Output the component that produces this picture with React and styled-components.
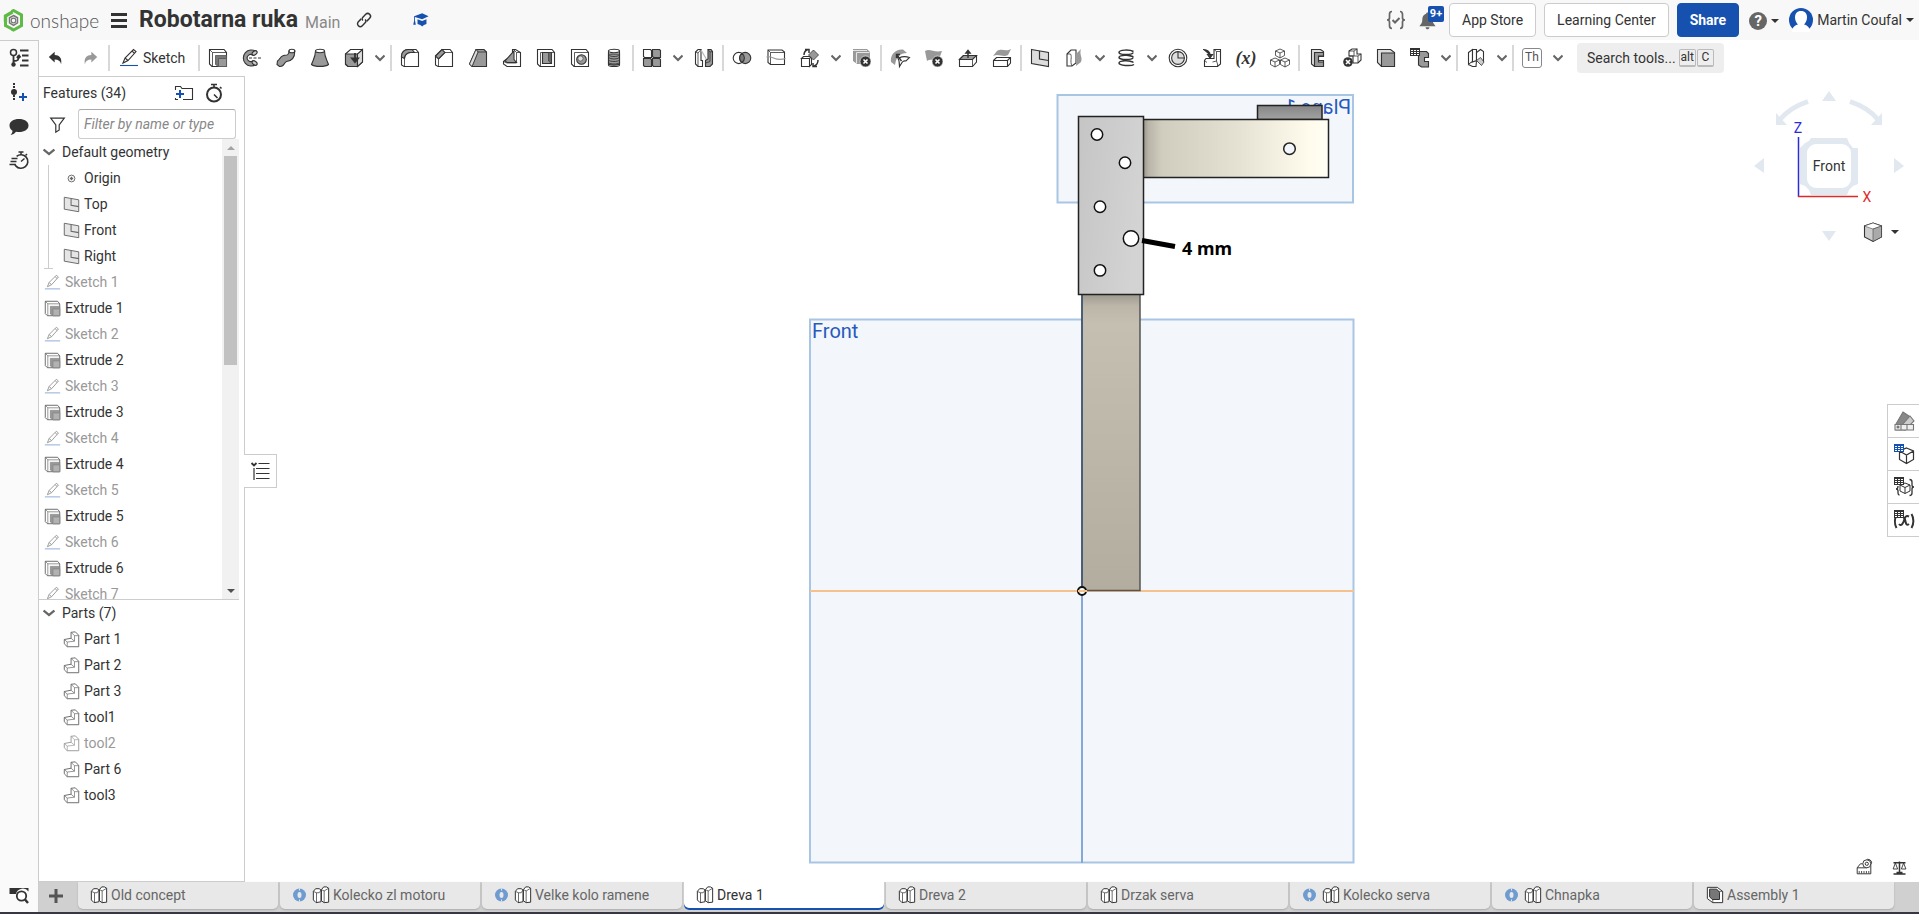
import React from 'react';
import styled, { createGlobalStyle, css } from 'styled-components';

const GlobalStyle = createGlobalStyle`
  * { box-sizing: border-box; }
  body { margin: 0; overflow: hidden; background: #fff; }
  body, button, input { font-family: Roboto, "Liberation Sans", sans-serif; font-size: 14px; color: #333; }
  button { padding: 0; border: 0; background: none; cursor: pointer; }
  ul { list-style: none; margin: 0; padding: 0; }
  svg { display: block; flex: none; }
`;

/* ---------- icons ---------- */

const D = '#333';
const G = '#999';
const BLUE = '#1651b0';

const dropX = (
  <g>
    <circle cx="13.5" cy="13.5" r="5.5" fill={D} stroke="#fff" strokeWidth="0.6" />
    <path d="M11.5 11.5l4 4M15.5 11.5l-4 4" stroke="#fff" strokeWidth="1.6" />
  </g>
);

const grid3 = (color) => (
  <g>
    <rect x="0" y="0" width="10" height="8" fill={color} stroke="none" />
    <path d="M1 2.500h2M4 2.500h2M7 2.500h2M1 4.500h2M4 4.500h2M7 4.500h2M1 6.500h2M4 6.500h2M7 6.500h2" stroke="#fff" strokeWidth="1" />
  </g>
);

const ICONS = {
  undo: <path d="M2 9L8.5 3v3.6c5 0 8.500 3 7.200 10.400-.8-3.600-3-5.200-7.200-5.200V15z" fill={D} stroke="none" />,
  redo: <path d="M18 9L11.500 3v3.600c-5 0-8.500 3-7.200 10.400.8-3.600 3-5.200 7.200-5.200V15z" fill={G} stroke="none" />,
  pencil: (
    <g>
      <path d="M4 15l2-5L14.500 1.500l2.500 2L9 12.500z M6 10l3 2.500M13 3l2.500 2.400" />
      <path d="M1 17.500h18" stroke={BLUE} />
    </g>
  ),
  extrude: (
    <g>
      <path d="M1.500 1.500H16l2.500 3v14H4l-2.500-2.500z" fill="#fff" />
      <path d="M1.500 1.500l3 3h14M4.500 4.500v14" strokeWidth="0.8" />
      <path d="M7.500 7.500h11v11h-8l-3-2z" fill="#777" stroke="#555" strokeWidth="0.8" />
      <path d="M10.500 10.500h8v8h-8z" fill={G} stroke="#555" strokeWidth="0.8" />
    </g>
  ),
  revolve: (
    <g>
      <path d="M14 3.500A8 8 0 1 0 14 16.500L10.500 13a3.500 3.500 0 1 1 0-6z" fill={G} />
      <ellipse cx="12.600" cy="5" rx="2.800" ry="1.800" transform="rotate(-35 12.600 5)" fill="#ccc" />
      <ellipse cx="12.600" cy="15" rx="2.800" ry="1.800" transform="rotate(35 12.600 15)" fill="#ccc" />
      <path d="M7 10h12" strokeDasharray="3 1.500" />
    </g>
  ),
  sweep: (
    <g>
      <path d="M13 3C13 8 10 7 7.500 7.500 3.500 8.500 4 12 1.500 13L1 16.500 3.500 18.500C9 19 7.500 14.500 10.500 13.500 16 13 18.800 10 18.800 3z" fill={G} />
      <ellipse cx="15.900" cy="3" rx="2.900" ry="1.800" fill="#fff" />
    </g>
  ),
  loft: (
    <g>
      <path d="M5.500 3C5.500 9 3 12 1.500 16.500c3 2.500 14 2.500 17 0C17 12 14.500 9 14.500 3z" fill={G} />
      <ellipse cx="10" cy="3" rx="4.500" ry="1.700" fill="#fff" />
    </g>
  ),
  thicken: (
    <g>
      <path d="M1.500 6l5-4.500h12v12.500l-5 4.500H4l-2.500-2z" fill="#fff" />
      <path d="M1.500 6h12v12.500H4L1.500 16z" fill={G} />
      <path d="M13.500 6l5-4.500v12.500l-5 4.500z" fill="#ddd" />
      <path d="M11 5v8M8 10.500l3 3.500 3-3.500z" fill={D} strokeWidth="1.800" />
    </g>
  ),
  fillet: (
    <g>
      <path d="M1.500 17V8a6.500 6.500 0 0 1 6.500-6.500h8l2.500 3v14H4z" fill="#fff" />
      <path d="M1.500 8A6.500 6.500 0 0 1 8 1.500h4l2.500 3h-4A6 6 0 0 0 4.500 10.500L1.500 9z" fill={G} />
      <path d="M4.500 18V10.500a6 6 0 0 1 6-6h8" strokeWidth="0.800" />
    </g>
  ),
  chamfer: (
    <g>
      <path d="M1.500 17V8L8 1.500h8l2.500 3v14H4z" fill="#fff" />
      <path d="M1.500 8L8 1.500l3 3L4.500 11z" fill={G} />
      <path d="M4.500 18V11l6.500-6.500h7.500" strokeWidth="0.800" />
    </g>
  ),
  draft: (
    <g>
      <path d="M1.500 16L8 1.500h8l2.500 2.500v14.500H4z" fill={G} />
      <path d="M4 18.500L10 4l-2-2.500M10 4h8.500" strokeWidth="0.800" />
      <path d="M1.500 16L8 1.500l2 2.500L4 18.500z" fill="#ddd" strokeWidth="0.800" />
    </g>
  ),
  rib: (
    <g>
      <path d="M1.500 13.500l3-2.500h6V1.500h3l5 3v14H5l-3.500-2.500z" fill="#fff" />
      <path d="M3 13L12 3v8.500l2.500 3H5z" fill={G} />
      <path d="M1.500 13.500L5 15h9.500V4.500h4M14.500 4.500l-3-3" strokeWidth="0.800" />
    </g>
  ),
  shell: (
    <g>
      <path d="M1.500 1.500H16l2.500 3v14H4l-2.500-2.500z" fill="#fff" />
      <path d="M4.500 18V4.500h14" strokeWidth="0.800" />
      <path d="M6.500 4.500h9v11h-9z" fill={G} />
      <path d="M12.500 4.500v8.500l3 2.500v-11z" fill="#666" strokeWidth="0.600" />
    </g>
  ),
  hole: (
    <g>
      <path d="M1.500 1.500H16l2.500 3v14H4l-2.500-2.500z" fill="#fff" />
      <path d="M4.500 18V4.500h14" strokeWidth="0.800" />
      <circle cx="11.500" cy="11.500" r="4.800" fill={G} />
      <circle cx="10.500" cy="10.500" r="2.600" fill="#ddd" strokeWidth="0.600" />
    </g>
  ),
  thread: (
    <g>
      <path d="M4.500 3v14c0 2 11 2 11 0V3z" fill="#fff" />
      <path d="M4.500 6v10c2 1.500 9 1.500 11 0V6z" fill={G} />
      <ellipse cx="10" cy="3" rx="5.500" ry="1.700" fill="#fff" />
      <path d="M4.500 7c2 2 9 2 11 0M4.500 9.500c2 2 9 2 11 0M4.500 12c2 2 9 2 11 0M4.500 14.500c2 2 9 2 11 0" strokeWidth="0.900" />
    </g>
  ),
  pattern: (
    <g>
      <path d="M1.500 1.500h7l1 1v7h-7l-1-1z" fill="#fff" />
      <path d="M10.500 1.500h7l1 1v7h-7l-1-1zM1.500 10.500h7l1 1v7h-7l-1-1zM10.500 10.500h7l1 1v7h-7l-1-1z" fill={G} />
    </g>
  ),
  mirror: (
    <g>
      <path d="M1.500 4V16l2.500 2.500h4.500V12.500H7V1.500H4z" fill="#fff" />
      <path d="M1.500 4l2.500 1L7 1.500M4 5v13.500" strokeWidth="0.800" />
      <path d="M7 2l5 8.500V15" stroke="#bbb" strokeWidth="1.200" />
      <path d="M11.500 18.500V12.500L14 11V1.500h3l1.500 2V16L16 18.500z" fill={G} />
      <path d="M14 1.500l2 2.500v9.500l-4.500 1.500M16 4l2.500-.500" strokeWidth="0.800" />
    </g>
  ),
  boolean: (
    <g>
      <circle cx="6.800" cy="10" r="5.600" fill="#fff" />
      <circle cx="13.200" cy="10" r="5.600" fill={G} />
      <path d="M10 5.400a5.600 5.600 0 0 1 0 9.200a5.600 5.600 0 0 1 0-9.200z" fill="#777" />
    </g>
  ),
  split: (
    <g>
      <path d="M2 2h14l2.500 2v12.500H4.500L2 14.500z" fill="#fff" />
      <path d="M2 2l2.500 2.500h14M4.500 4.500v12" strokeWidth="0.800" />
      <path d="M0.500 9c6-2 9 5 19 1.500" stroke={G} />
    </g>
  ),
  transform: (
    <g>
      <path d="M1.500 10.500l2-2h8l-2 2zM1.500 10.500h8v8h-8zM9.500 10.500l2-2v8l-2 2z" fill="#fff" />
      <path d="M13.500 2l5 5-5 5-5-5z" fill={G} strokeWidth="0.800" />
      <path d="M4 7c0-3 1-4.500 4-5.500M5 1.500h4v3.500M18 12c0 3-1 5-4 6M17 18.500h-4V15" strokeWidth="1.500" />
    </g>
  ),
  deletePart: (
    <g>
      <path d="M1 1h14l3 3v12H5l-4-3z" fill={G} stroke="none" />
      <path d="M1 2.500h14M4.500 4.500h13M4.500 4.500v11" stroke="#e5e5e5" />
      {dropX}
    </g>
  ),
  modifySurface: (
    <g>
      <path d="M1 14C0 7 5 1 13 1.500l4 3.500C10 5 6 9 5 17z" fill={G} stroke="none" />
      <path d="M9 10c3-1.500 6-2 10.500-.5L16 13c-2-.5-3 0-4 1.500l-2.500 4C9.500 15 9.500 12 7 8" fill="#fff" />
      <path d="M11.500 13L7 7M6.500 10V6.500H10" strokeWidth="1.400" />
    </g>
  ),
  deleteFace: (
    <g>
      <path d="M1 3c5-3 9 2 17 0l-3 8c-4 3-7-1-12 2z" fill={G} stroke="none" />
      {dropX}
    </g>
  ),
  moveFace: (
    <g>
      <path d="M1.500 11.500l4-4h13v6.500l-4 4.500h-13z" fill="#fff" />
      <path d="M1.500 11.500l4-4h13l-4 4z" fill={G} />
      <path d="M14.500 11.500v7" strokeWidth="0.800" />
      <path d="M10 10V3M8 5l2-2.500L12 5z" fill={D} strokeWidth="1.500" />
    </g>
  ),
  replaceFace: (
    <g>
      <path d="M1 8l4-5c5-3 9 1 14-2l-3 6c-5 3-9-2-15 1z" fill={G} stroke="none" />
      <path d="M1.500 12.500l3-3h14V15l-3 3.500h-14zM1.500 12.500h14l3-3M15.500 12.500v6" fill="#fff" />
    </g>
  ),
  plane: (
    <g>
      <path d="M1.500 1.500l17 3v14l-17-3z" fill="#ddd" />
      <path d="M9.500 3v8l9 1.500" strokeWidth="1.200" />
    </g>
  ),
  surface: (
    <g>
      <path d="M3 6l4-4h5v13l-4 3H3z" fill="#fff" />
      <path d="M3 6h3.500c2 3-1 7 1.500 12" strokeWidth="0.800" />
      <path d="M12 6l5-5c-2 6 2 8 0 13l-5 4c1-4-1-7 0-12z" fill={G} stroke="none" />
    </g>
  ),
  helix: (
    <path d="M17.500 3.500C14 1.500 3 1.500 3 4.500s14 2.500 14 0M17.500 9C14 6.500 3 7 3 9.500s14 3 14 0M17.500 14.500C14 12 3 12.500 3 15s12 3.500 15 1.500M3 4.500c0 2 8 2.500 14 4M3 9.500c0 2 8 2.500 14 4.500" strokeWidth="1.500" />
  ),
  clock: (
    <g>
      <circle cx="10" cy="10" r="8.800" fill="#fff" />
      <circle cx="10" cy="10" r="6.400" fill="#ddd" />
      <path d="M10 3.600V10h6.400" />
    </g>
  ),
  derived: (
    <g>
      <path d="M2.500 12.500V18.500h13l3-2.500V1.500h-6.500v9H4z" fill="#fff" />
      <path d="M12 1.500l2.500 2h4M14.500 3.500v9.500l-4 1M2.500 12.500l2.500 2M15.500 18.500V16l-1-3" strokeWidth="0.800" />
      <path d="M1 1.500c5 0 7 2 7 6M5.500 6.500L8 10l2.500-3.500z" fill={D} strokeWidth="1.200" />
    </g>
  ),
  composite: (
    <g>
      {[[10, 1], [5, 10], [15, 10]].map(([x, y]) => (
        <path key={x} transform={`translate(${x} ${y})`} d="M0 0l4.500 2v4.500L0 9l-4.500-2.500V2zM-4.500 2L0 4l4.500-2M0 4v5" fill="#fff" strokeWidth="0.800" />
      ))}
    </g>
  ),
  frame: (
    <g>
      <path d="M3.500 1.500h9l3 2v5h-5v4h5v6h-9l-3-2.500z" fill="#ddd" />
      <path d="M6.500 4.500h9v3.500h-5v6h5v4.500h-9z" fill={G} />
    </g>
  ),
  deleteFrame: (
    <g>
      <path d="M7 3l3-2h5v5h4v6l-3 3h-5V8H7z" fill="#fff" />
      <path d="M7 3h5v5h-5M12 3l3-2M12 8h4v7M16 8l3-2" strokeWidth="0.800" />
      <circle cx="6" cy="14" r="4.800" fill={D} stroke="none" />
      <path d="M4 12l4 4M8 12l-4 4" stroke="#fff" strokeWidth="1.600" />
    </g>
  ),
  solid: (
    <g>
      <path d="M1.500 1.500h13l4 3v14h-13l-4-4z" fill="#ddd" />
      <path d="M5.500 5h13v13.500h-13z" fill={G} />
    </g>
  ),
  tableFrame: (
    <g>
      <path d="M8.500 3.500h8l2 2V9.500h-4v4h4v5.500h-7l-3-2z" fill={G} />
      {grid3(D)}
    </g>
  ),
  sheet: (
    <g>
      <path d="M2.500 4.500l4-3v12l-4 3z" fill="#fff" />
      <path d="M6.500 1.500h4v11l-4 1.500zM2.500 16.500l4 2H10l.500-6" fill="#fff" />
      <path d="M10.500 12.500V4.500l4-3 3 2v10z" fill="#fff" />
      <path d="M10.500 12.500l4-3 3.500 4.500-2.500 3.500z" fill="#ccc" strokeWidth="0.800" />
    </g>
  ),
  part: (
    <g>
      <path d="M9.500 1.500l5-.500 4 4v13.500H5L1.500 15v-5l8-1.500z" fill="#fff" />
      <path d="M9.500 1.500l4 4h5M13.500 5.500V12L5 13l-3.500-3M5 13v5.500M9.500 8.500l4 3.500" strokeWidth="0.800" />
    </g>
  ),
  origin: (
    <g>
      <circle cx="10" cy="10" r="4" />
      <path d="M10 8v4M8 10h4" strokeWidth="1.500" />
    </g>
  ),
  versions: (
    <g>
      <circle cx="4.500" cy="4.500" r="3" strokeWidth="1.500" />
      <path d="M4.500 7.500v9M4.500 13c5 0 5-1 5-5M8 10l2-2.500 1.500 2" strokeWidth="1.800" />
      <circle cx="4.500" cy="16.500" r="2.200" fill={D} stroke="none" />
      <circle cx="9.500" cy="9" r="1.800" fill={D} stroke="none" />
      <path d="M11 2.500h8.500M13 7.500h6.500M13 12.500h6.500M11 17.500h8.500" strokeWidth="2" />
    </g>
  ),
  insert: (
    <g>
      <path d="M5 1v18" strokeWidth="2" strokeDasharray="2 1" />
      <circle cx="5" cy="10" r="3" fill={D} stroke="none" />
      <path d="M14 11v8M10 15h8" stroke={BLUE} strokeWidth="2" />
    </g>
  ),
  comment: <path d="M10 3c5.500 0 9.500 2.600 9.500 6.500S15.500 16 10 16c-1 0-2-.1-3-.3C5.500 17.500 4 18.500 1.500 19c1.300-1.300 2-2.500 2-4.300C1.500 13.500.5 11.500.5 9.500.5 5.600 4.500 3 10 3z" fill={D} stroke="none" />,
  timer: (
    <g>
      <circle cx="12" cy="11.500" r="6.800" strokeWidth="1.600" strokeDasharray="34 9" transform="rotate(-130 12 11.500)" />
      <path d="M9.500 2h5M12 2v3M18 4l-1.500 1.500M12 11.500l3.500-3M2.500 8.500h6M1.500 11.500h6M.5 14.500h6" strokeWidth="1.500" />
    </g>
  ),
  stopwatch: (
    <g>
      <circle cx="10" cy="11.500" r="7" strokeWidth="2" />
      <path d="M7 1.500h6M10 1.500v3M16 4l1.500 1.500M10 11.500l3.500 3.500" strokeWidth="1.600" />
    </g>
  ),
  searchTab: (
    <g>
      <path d="M.5 3h19v3.500A7 7 0 0 0 7 9H.5z" fill={D} stroke="none" />
      <circle cx="12.500" cy="11" r="4.700" fill="#fff" strokeWidth="1.800" />
      <path d="M16 14.500l3 3.500" strokeWidth="2.400" />
    </g>
  ),
  folder: (
    <g>
      <path d="M1.500 7V3.500h5l1.500 2h10.500v11H9M1.500 15v1.500H4" />
      <path d="M6 7v8M2 11h8" stroke={BLUE} strokeWidth="2" />
    </g>
  ),
  funnel: <path d="M2 2.500h16L12 10.500v6l-4 2.500v-8.500z" strokeWidth="1.400" />,
  listToggle: (
    <g>
      <path d="M1.500 2l2.500 2.500L6.500 2" strokeWidth="1.800" />
      <path d="M4 7v12" strokeWidth="1.800" stroke="#777" />
      <path d="M8.500 2.500h11M6 7.500h13.500M6 12.500h13.500M6 17.500h13.500" strokeWidth="1.200" />
    </g>
  ),
  studio: (
    <g>
      <path d="M1.500 6l2.500-3h4l2 1.500V17.500L4.500 18.500l-3-3z" fill="#fff" />
      <path d="M1.500 6L5 7.500h3l2-3M5 7.500v11" strokeWidth="0.800" />
      <path d="M10.500 4l2.500-3h3l2.500 1.500v15.500l-5 .5-3-2z" fill="#fff" />
      <path d="M10.500 4l3 1.500 5-3M13.500 5.500v13" strokeWidth="0.800" />
    </g>
  ),
  assembly: (
    <g>
      <path d="M1.500 1.500h11l6 4.500v12.500h-11l-6-4.500z" fill="#fff" />
      <path d="M7.500 6h11M7.500 6v12.500" strokeWidth="0.800" />
      <path d="M4 3.500h8l3 3.500v8H7L4 12z" fill="#777" />
    </g>
  ),
  material: (
    <g stroke="#777">
      <path d="M2 13L9 1l6 4-4 14H2z" fill="#888" />
      <path d="M8 14l8-9 4 5-9 9z" fill="#ccc" />
      <path d="M1 13.500h18.500v5.500H1z" fill="#eee" />
      <path d="M7 13.500V19M13 13.500V19" />
      <circle cx="4" cy="16" r="1" fill="#777" />
    </g>
  ),
  cubeTable: (
    <g>
      <path d="M12.500 4l7 3v8.500l-7 4-7-4V7zM5.500 7l7 4 7-4M12.500 11v8.500" fill="#fff" strokeWidth="1.200" />
      {grid3(BLUE)}
    </g>
  ),
  cubeBraces: (
    <g>
      <path d="M11 6l5 2v6l-5 2.500L6 14V8zM6 8l5 2.500L16 8M11 10.500v6" fill="#fff" strokeWidth="1" />
      <path d="M4 9c0 2-.500 3-2 3 1.500 0 2 1 2 2v2c0 1.500.500 2 1.500 2M15.500 2.500c2 0 2.500.500 2.500 2.500v3c0 1.500.500 2 2 2-1.500 0-2 1-2 2v4c0 2-.500 2.500-2.500 2.500" strokeWidth="1.300" />
      {grid3(D)}
    </g>
  ),
  variableTable: (
    <g>
      <path d="M2.500 5c-2 4-2 9 0 13M17.500 4c2.500 4 2.500 10 0 14" strokeWidth="2" />
      <path d="M5 14c2 2.500 4 0 5-3.500s2-5.500 5-4M9 7.500c2 0 2 2 2.500 4s1 4.500 3.500 2.500" strokeWidth="2" />
      {grid3(D)}
    </g>
  ),
  measure: (
    <g>
      <path d="M1.500 11h12V8a4 4 0 1 1 5-1v11.500h-17zM1.500 11l4-5h3" fill="#fff" strokeWidth="1.200" />
      <circle cx="13.500" cy="6" r="5" fill="#fff" strokeWidth="1.200" />
      <circle cx="13.500" cy="6" r="2" strokeWidth="1.200" />
      <path d="M4 18v-3M7 18v-3M10 18v-3M13 18v-3M16 18v-3" />
    </g>
  ),
  scale: (
    <g>
      <path d="M2 18.500h16M6 16.500h8M10 2v14M2 3.500h16" strokeWidth="2" />
      <path d="M4.500 4L1.500 12h6zM15.500 4l-3 8h6z" fill="#fff" strokeWidth="1.200" />
    </g>
  ),
  link: (
    <g strokeWidth="1.800" transform="rotate(-45 10 10)">
      <path d="M8.500 6.500h-5a3.500 3.500 0 0 0 0 7h5a3 3 0 0 0 3-3" />
      <path d="M11.500 13.500h5a3.500 3.500 0 0 0 0-7h-5a3 3 0 0 0-3 3" />
    </g>
  ),
  education: (
    <path d="M12 1.500l7.500 3.500L12 8.500 3.500 6v4l1 5H1.500l1-5V5zM6.500 8.500l5.500 2 5-2V14c-2 .500-4 1.500-5 3-1.200-1.500-3-2.500-5.500-3z" fill={BLUE} stroke="none" />
  ),
  braces: (
    <g stroke="#666" strokeWidth="1.700">
      <path d="M6 1.500c-2 0-2.500 1-2.500 3V8c0 1-.7 2-2.500 2 1.800 0 2.500 1 2.500 2v3.500c0 2 .5 3 2.500 3M14 1.500c2 0 2.500 1 2.500 3V8c0 1 .7 2 2.500 2-1.800 0-2.500 1-2.500 2v3.500c0 2-.5 3-2.500 3" />
      <path d="M6.500 10l2.500 2.500L13.500 8" strokeWidth="2" />
    </g>
  ),
  bell: <path d="M10 1.500c1 0 1.500.700 1.500 1.500 3 1 4 3 4 6.500 0 3 1 4 3 6.500h-17c2-2.500 3-3.500 3-6.500C4.500 6 5.500 4 8.500 3c0-.8.5-1.500 1.500-1.500zM8 17h4c0 3-4 3-4 0z" fill="#666" stroke="none" />,
  viewCube: (
    <g>
      <path d="M10 1l8.500 3v11L10 19.500 1.500 15V4z" fill="#ccc" />
      <path d="M10 1l8.500 3L10 7 1.500 4z" fill="#fff" strokeWidth="0.500" />
      <path d="M10 7l8.500-3v11L10 19.500z" fill="#aaa" strokeWidth="0.500" />
    </g>
  ),
};

const Glyph = styled.svg`
  width: ${(p) => p.$size}px;
  height: ${(p) => p.$size}px;
  overflow: visible;
`;

function Icon({ name, size = 20 }) {
  return (
    <Glyph $size={size} viewBox="0 0 20 20" fill="none" stroke={D} strokeWidth="1.100" aria-hidden="true">
      {ICONS[name]}
    </Glyph>
  );
}

function Chevron({ size = 10 }) {
  return (
    <svg width={size} height="8" viewBox="0 0 10 8" fill="none" stroke="#666" strokeWidth="2" preserveAspectRatio="none" aria-hidden="true">
      <path d="M0.500 1.500L5 6l4.500-4.500" />
    </svg>
  );
}

const Caret = styled.span`
  width: 0;
  height: 0;
  border: 4px solid transparent;
  border-top-color: #333;
  border-bottom: 0;
`;

/* ---------- page frame ---------- */

const Page = styled.div`
  height: 100vh;
  display: flex;
  flex-direction: column;
  border-bottom: 2px solid #3a363f;
`;

const Header = styled.header`
  flex: none;
  height: 40px;
  display: flex;
  align-items: center;
  padding: 0 5px 0 3px;
  background: #f8f8f8;
`;

const Body = styled.div`
  flex: 1;
  min-height: 0;
  display: flex;
`;

const Main = styled.main`
  flex: 1;
  min-width: 0;
  display: flex;
  flex-direction: column;
`;

const Workspace = styled.div`
  flex: 1;
  min-height: 0;
  display: flex;
`;

/* ---------- header ---------- */

const Brand = styled.a`
  display: flex;
  align-items: center;
  gap: 6px;
  width: 108px;
  color: #555;
  text-decoration: none;
  font: 300 19px Lato, sans-serif;
`;

const MenuButton = styled.button`
  width: 16px;
  height: 15px;
  margin-top: 1px;
  border-top: 3px solid #333;
  border-bottom: 3px solid #333;
  display: flex;
  align-items: center;
  &::before { content: ''; width: 100%; height: 3px; background: #333; }
`;

const Title = styled.h1`
  margin: 0 0 0 12px;
  font-size: 23px;
  line-height: 28px;
  font-weight: 700;
`;

const Branch = styled.span`
  margin: 4px 0 0 7px;
  width: 51px;
  font-size: 16px;
  color: #888;
`;

const HeaderIcon = styled.button`
  margin-right: ${(p) => p.$gap || 0}px;
`;

const HeaderActions = styled.div`
  margin-left: auto;
  display: flex;
  align-items: center;
`;

const BellButton = styled.button`
  position: relative;
  margin: 0 12px;
`;

const Badge = styled.span`
  position: absolute;
  top: -5px;
  right: -7px;
  width: 16px;
  height: 16px;
  border-radius: 2px;
  background: ${BLUE};
  color: #fff;
  font-size: 11px;
  line-height: 15px;
  font-weight: 700;
`;

const ActionButton = styled.button`
  height: 34px;
  padding: 0 12px;
  margin-right: 8px;
  border: 1px solid #ccc;
  border-radius: 4px;
  background: #fff;
  white-space: nowrap;
  ${(p) => p.$primary && css`
    background: ${BLUE};
    border-color: ${BLUE};
    color: #fff;
    font-weight: 700;
  `}
`;

const HelpButton = styled.button`
  display: flex;
  align-items: center;
  gap: 4px;
  margin: 2px 10px 0 2px;
`;

const HelpDisc = styled.span`
  width: 18px;
  height: 18px;
  border-radius: 50%;
  background: #666;
  color: #fff;
  font-size: 15px;
  line-height: 18px;
  font-weight: 700;
`;

const UserButton = styled.button`
  display: flex;
  align-items: center;
  gap: 4px;
`;

/* ---------- left rail ---------- */

const Rail = styled.nav`
  flex: none;
  width: 39px;
  display: flex;
  flex-direction: column;
  align-items: center;
  border-top: 1px solid #ccc;
  border-right: 1px solid #ccc;
  background: #fafafa;
`;

const RailButton = styled.button`
  width: 38px;
  height: 34px;
  display: flex;
  align-items: center;
  justify-content: center;
  &:last-child { margin-top: auto; }
`;

/* ---------- toolbar ---------- */

const Toolbar = styled.div`
  flex: none;
  height: 36px;
  display: flex;
  align-items: center;
  background: #fff;
`;

const ToolButton = styled.button`
  width: 34px;
  height: 34px;
  display: flex;
  align-items: center;
  justify-content: center;
`;

const DropButton = styled(ToolButton)`
  width: 18px;
`;

const SketchButton = styled.button`
  height: 34px;
  width: 86px;
  padding-left: 8px;
  display: flex;
  align-items: center;
  gap: 4px;
`;

const Separator = styled.span`
  width: 2px;
  height: 26px;
  margin: 0 1px;
  background: #d8d8d8;
`;

const Variable = styled.span`
  font: italic 700 18px "Liberation Serif", serif;
`;

const ThemeBox = styled.span`
  width: 20px;
  height: 20px;
  border: 1px solid #888;
  border-radius: 3px;
  font-size: 12px;
  line-height: 17px;
  color: #555;
`;

const SearchTools = styled.button`
  height: 30px;
  margin-left: 10px;
  padding: 0 10px;
  display: flex;
  align-items: center;
  border-radius: 4px;
  background: #eee;
`;

const Key = styled.kbd`
  height: 18px;
  padding: 0 1px;
  margin-left: 1px;
  border: 1px solid #bbb;
  border-bottom-width: 2px;
  border-radius: 2px;
  font: 12px/15px Roboto, sans-serif;
  min-width: 17px;
  &:first-of-type { margin-left: 3px; }
`;

/* ---------- feature panel ---------- */

const Panel = styled.aside`
  flex: none;
  position: relative;
  width: 206px;
  display: flex;
  flex-direction: column;
  border: 1px solid #ccc;
  border-left: 0;
  background: #fff;
`;

const PanelHead = styled.div`
  height: 32px;
  padding: 0 20px 0 4px;
  display: flex;
  align-items: center;
`;

const PanelTitle = styled.h2`
  flex: 1;
  margin: 0;
  font-size: 14px;
  font-weight: 400;
`;

const FilterRow = styled.div`
  display: flex;
  align-items: center;
  padding: 0 8px 0 10px;
  gap: 12px;
`;

const FilterInput = styled.input`
  flex: 1;
  min-width: 0;
  height: 30px;
  padding: 0 5px;
  border: 1px solid #ccc;
  border-top-color: #aaa;
  border-radius: 3px;
  &::placeholder { color: #888; font-style: italic; opacity: 1; }
`;

const FeatureArea = styled.div`
  flex: 1;
  min-height: 0;
  display: flex;
  margin-right: 5px;
  border-bottom: 1px solid #ccc;
`;

const Tree = styled.ul`
  flex: 1;
  overflow: hidden;
`;

const Row = styled.div`
  height: 26px;
  padding-left: ${(p) => (p.$nested ? 24 : 5)}px;
  display: flex;
  align-items: center;
  gap: 4px;
  color: ${(p) => (p.$dim ? '#999' : '#333')};
  white-space: nowrap;
  svg { opacity: ${(p) => (p.$dim ? 0.5 : 0.75)}; }
`;

const GroupButton = styled.button`
  height: 26px;
  padding-left: 4px;
  display: flex;
  align-items: center;
  gap: 7px;
`;

const GeometryList = styled.ul`
  position: relative;
  &::before, &::after { content: ''; position: absolute; bottom: 0; background: #ccc; }
  &::before { left: 9px; top: 0; width: 1px; }
  &::after { left: 5px; width: 9px; height: 1px; }
`;

const Scrollbar = styled.div`
  width: 17px;
  padding: 0 2px;
  display: flex;
  flex-direction: column;
  align-items: center;
  background: #f1f1f1;
`;

const ScrollArrow = styled.span`
  height: 17px;
  display: flex;
  align-items: center;
  &::before {
    content: '';
    border: 4px solid transparent;
    ${(p) => (p.$up
      ? css`border-bottom-color: #a3a3a3; border-top: 0;`
      : css`border-top-color: #505050; border-bottom: 0;`)}
  }
`;

const ScrollTrack = styled.div`
  flex: 1;
  align-self: stretch;
  &::before { content: ''; display: block; height: 49%; background: #c1c1c1; }
`;

const PartsArea = styled.div`
  flex: none;
  height: 281px;
`;

const PanelToggle = styled.button`
  position: absolute;
  left: 205px;
  top: calc(50% - 25px);
  width: 33px;
  height: 34px;
  display: flex;
  align-items: center;
  justify-content: center;
  border: 1px solid #ccc;
  border-left: 0;
  background: #fff;
  z-index: 1;
`;

/* ---------- canvas ---------- */

const Canvas = styled.section`
  flex: 1;
  min-width: 0;
  position: relative;
  overflow: hidden;
`;

const Model = styled.svg`
  position: absolute;
  inset: 0;
  width: 100%;
  height: 100%;
`;

const ViewCube = styled.svg`
  position: absolute;
  top: 4px;
  right: 0;
`;

const ViewMenu = styled.button`
  position: absolute;
  top: 146px;
  right: 20px;
  display: flex;
  align-items: center;
  gap: 8px;
`;

const SideTabs = styled.div`
  position: absolute;
  top: 328px;
  right: 0;
  width: 32px;
  border: 1px solid #ccc;
  border-right: 0;
  background: #fff;
`;

const SideTab = styled.button`
  width: 100%;
  height: 32px;
  display: flex;
  align-items: center;
  justify-content: center;
  & + & { height: 33px; border-top: 1px solid #ccc; }
`;

const MeasureTools = styled.div`
  position: absolute;
  right: 12px;
  bottom: 7px;
  display: flex;
  gap: 20px;
`;

/* ---------- document tabs ---------- */

const TabBar = styled.nav`
  flex: none;
  height: 30px;
  display: flex;
  align-items: flex-start;
  gap: 2px;
  background: #d0d0d0;
`;

const AddTab = styled.button`
  width: 37px;
  height: 28px;
  padding-left: 9px;
`;

const Tab = styled.button`
  flex: 0 1 200px;
  min-width: 0;
  height: ${(p) => (p.$active ? 28 : 27)}px;
  padding: 0 12px 2px;
  display: flex;
  align-items: center;
  gap: 3px;
  border-radius: 0 0 5px 5px;
  background: ${(p) => (p.$active ? '#fff' : '#e8e8e8')};
  color: ${(p) => (p.$active ? '#333' : '#666')};
  box-shadow: ${(p) => (p.$active ? `inset 0 -2px ${BLUE}` : '0 1px 2px #aaa')};
  white-space: nowrap;
`;

function Tool({ name }) {
  if (name === 'more') return <DropButton aria-label="More tools"><Chevron /></DropButton>;
  if (name === '|') return <Separator />;
  if (name === 'variable') return <ToolButton aria-label="Variable"><Variable>(x)</Variable></ToolButton>;
  return <ToolButton aria-label={name}><Icon name={name} /></ToolButton>;
}

const TOOLS = [
  '|', 'extrude', 'revolve', 'sweep', 'loft', 'thicken', 'more',
  '|', 'fillet', 'chamfer', 'draft', 'rib', 'shell', 'hole', 'thread',
  '|', 'pattern', 'more', 'mirror',
  '|', 'boolean', 'split', 'transform', 'more', 'deletePart',
  '|', 'modifySurface', 'deleteFace', 'moveFace', 'replaceFace',
  '|', 'plane', 'surface', 'more', 'helix', 'more', 'clock', 'derived', 'variable', 'composite',
  '|', 'frame', 'deleteFrame', 'solid', 'tableFrame', 'more',
  '|', 'sheet', 'more', '|',
];

const FEATURES = [1, 2, 3, 4, 5, 6].flatMap((n) => [
  { label: `Sketch ${n}`, icon: 'pencil', dim: true },
  { label: `Extrude ${n}`, icon: 'extrude' },
]).concat({ label: 'Sketch 7', icon: 'pencil', dim: true });

const PARTS = ['Part 1', 'Part 2', 'Part 3', 'tool1', 'tool2', 'Part 6', 'tool3'];

const TABS = [
  { label: 'Old concept' },
  { label: 'Kolecko zl motoru', linked: true },
  { label: 'Velke kolo ramene', linked: true },
  { label: 'Dreva 1', active: true },
  { label: 'Dreva 2' },
  { label: 'Drzak serva' },
  { label: 'Kolecko serva', linked: true },
  { label: 'Chnapka', linked: true },
  { label: 'Assembly 1', icon: 'assembly' },
];

const HOLES = [[1097, 134.5, 5.700], [1125, 162.700, 5.700], [1100, 206.700, 5.700], [1131, 238.500, 7.700], [1100, 270.400, 5.700]];

function Logo() {
  return (
    <svg width="21" height="23" viewBox="0 0 21 23" fill="none" aria-hidden="true">
      <path d="M2.500 13V7L9.500 3" stroke="#5fba46" strokeWidth="3.400" />
      <path d="M8.500 2.500l2-1 8 4.500v8" stroke="#5fba46" strokeWidth="3" />
      <path d="M18.500 12v4.500l-8 4.500-2-1" stroke="#5fba46" strokeWidth="3" />
      <path d="M10 20.500L2.500 16.500V11" stroke="#5fba46" strokeWidth="3" />
      <path d="M10.500 6.500l4 2.300v5l-4 2.500-4-2.500v-5z" stroke="#777" strokeWidth="1.500" />
      <circle cx="10.500" cy="11.500" r="2.300" stroke="#777" strokeWidth="1.200" />
    </svg>
  );
}

function ModelView() {
  return (
    <Model viewBox="245 76 1674 806" preserveAspectRatio="xMidYMid slice" role="img" aria-label="Front view of the arm">
      <defs>
        <linearGradient id="beam" x1="0" x2="1">
          <stop offset="0" stopColor="#989486" />
          <stop offset="0.030" stopColor="#b8b4a7" />
          <stop offset="0.100" stopColor="#d0ccbe" />
          <stop offset="0.500" stopColor="#e4e1d3" />
          <stop offset="0.900" stopColor="#fffcee" />
          <stop offset="1" stopColor="#fffdf2" />
        </linearGradient>
        <linearGradient id="post" x2="0" y2="1">
          <stop offset="0" stopColor="#9d998d" />
          <stop offset="0.040" stopColor="#bbb6a8" />
          <stop offset="0.100" stopColor="#c4bfb1" />
          <stop offset="1" stopColor="#b3ada0" />
        </linearGradient>
        <linearGradient id="bracket" x1="0" x2="1" y2="0.300">
          <stop offset="0" stopColor="#c5c5c5" />
          <stop offset="1" stopColor="#d3d3d3" />
        </linearGradient>
        <linearGradient id="block" x2="0" y2="1">
          <stop offset="0" stopColor="#868686" />
          <stop offset="1" stopColor="#a2a2a2" />
        </linearGradient>
      </defs>
      <g fill="#f3f7fb" stroke="#a9c5e4" strokeWidth="2">
        <rect x="1057.500" y="95" width="295.500" height="107.500" />
        <rect x="810" y="319.500" width="543.500" height="543" />
      </g>
      <path d="M810 591h544" stroke="#f5c28d" strokeWidth="2" />
      <path d="M1082 591v272" stroke="#85a9d4" strokeWidth="2" />
      <g fill="#2859bd" fontFamily="Roboto, sans-serif" fontSize="20">
        <text x="812" y="338">Front</text>
        <text transform="translate(1351 114) scale(-1 1)">Plane 1</text>
      </g>
      <g stroke="#222" strokeWidth="1.500">
        <rect x="1082" y="294" width="58" height="296.500" fill="url(#post)" stroke="#555" />
        <path d="M1082 294v297" stroke="#3d5878" />
        <rect x="1257.500" y="105.500" width="64.500" height="14" fill="url(#block)" />
        <rect x="1143" y="119.500" width="185.500" height="58" fill="url(#beam)" />
        <rect x="1078.500" y="116.500" width="65" height="178" fill="url(#bracket)" />
        <circle cx="1289.500" cy="148.700" r="5.800" fill="#f3f7fb" />
        {HOLES.map(([x, y, r]) => <circle key={y} cx={x} cy={y} r={r} fill="#fff" stroke="#111" />)}
        <circle cx="1082" cy="591" r="4" fill="#fff" stroke="#111" strokeWidth="2" />
      </g>
      <path d="M1078 591h9" stroke="#f5c28d" strokeWidth="2" />
      <path d="M1142 240.500l33 6" stroke="#000" strokeWidth="5" />
      <text x="1182" y="255" fontFamily="Noto Sans, sans-serif" fontSize="18" fontWeight="700">4 mm</text>
    </Model>
  );
}

export default function App() {
  return (
    <>
      <GlobalStyle />
      <Page>
        <Header>
          <Brand href="#"><Logo />onshape</Brand>
          <MenuButton aria-label="Menu" />
          <Title>Robotarna ruka</Title>
          <Branch>Main</Branch>
          <HeaderIcon $gap={40} aria-label="Copy link"><Icon name="link" size={16} /></HeaderIcon>
          <HeaderIcon aria-label="Education"><Icon name="education" size={17} /></HeaderIcon>
          <HeaderActions>
            <HeaderIcon aria-label="Feature scripts"><Icon name="braces" size={20} /></HeaderIcon>
            <BellButton aria-label="Notifications"><Icon name="bell" size={19} /><Badge>9+</Badge></BellButton>
            <ActionButton>App Store</ActionButton>
            <ActionButton>Learning Center</ActionButton>
            <ActionButton $primary>Share</ActionButton>
            <HelpButton aria-label="Help"><HelpDisc>?</HelpDisc><Caret /></HelpButton>
            <UserButton>
              <svg width="24" height="24" viewBox="0 0 24 24" aria-hidden="true">
                <circle cx="12" cy="12" r="12" fill={BLUE} />
                <path d="M12 3c4 0 6 2.500 6 6.500 0 3-1.500 5.500-3 7 3 .8 6 2.500 6 7.500H3c0-5 3-6.700 6-7.500-1.500-1.500-3-4-3-7C6 5.500 8 3 12 3z" fill="#fff" />
              </svg>
              Martin Coufal
              <Caret />
            </UserButton>
          </HeaderActions>
        </Header>
        <Body>
          <Rail>
            {['versions', 'insert', 'comment', 'timer', 'searchTab'].map((n) => (
              <RailButton key={n} aria-label={n}><Icon name={n} /></RailButton>
            ))}
          </Rail>
          <Main>
            <Toolbar>
              <ToolButton aria-label="Undo"><Icon name="undo" size={18} /></ToolButton>
              <ToolButton aria-label="Redo"><Icon name="redo" size={18} /></ToolButton>
              <Separator />
              <SketchButton><Icon name="pencil" />Sketch</SketchButton>
              {TOOLS.map((name, i) => <Tool key={i} name={name} />)}
              <ToolButton aria-label="Custom feature"><ThemeBox>Th</ThemeBox></ToolButton>
              <DropButton aria-label="More custom features"><Chevron /></DropButton>
              <SearchTools>Search tools...<Key>alt</Key><Key>C</Key></SearchTools>
            </Toolbar>
            <Workspace>
              <Panel>
                <PanelHead>
                  <PanelTitle>Features (34)</PanelTitle>
                  <HeaderIcon $gap={10} aria-label="Add folder"><Icon name="folder" /></HeaderIcon>
                  <HeaderIcon aria-label="Regeneration times"><Icon name="stopwatch" /></HeaderIcon>
                </PanelHead>
                <FilterRow>
                  <Icon name="funnel" size={17} />
                  <FilterInput aria-label="Filter features" placeholder="Filter by name or type" />
                </FilterRow>
                <FeatureArea>
                  <Tree>
                    <li>
                      <GroupButton><Chevron size={12} />Default geometry</GroupButton>
                      <GeometryList>
                        <li><Row $nested><Icon name="origin" size={17} />Origin</Row></li>
                        {['Top', 'Front', 'Right'].map((n) => (
                          <li key={n}><Row $nested><Icon name="plane" size={17} />{n}</Row></li>
                        ))}
                      </GeometryList>
                    </li>
                    {FEATURES.map((f) => (
                      <li key={f.label}><Row $dim={f.dim}><Icon name={f.icon} size={17} />{f.label}</Row></li>
                    ))}
                  </Tree>
                  <Scrollbar><ScrollArrow $up /><ScrollTrack /><ScrollArrow /></Scrollbar>
                </FeatureArea>
                <PartsArea>
                  <GroupButton><Chevron size={12} />Parts (7)</GroupButton>
                  <ul>
                    {PARTS.map((n) => (
                      <li key={n}><Row $nested $dim={n === 'tool2'}><Icon name="part" size={17} />{n}</Row></li>
                    ))}
                  </ul>
                </PartsArea>
                <PanelToggle aria-label="Toggle feature list"><Icon name="listToggle" /></PanelToggle>
              </Panel>
              <Canvas>
                <ModelView />
                <ViewCube width="179" height="166" viewBox="1740 80 179 166" aria-label="View cube">
                  <g fill="#e1e8ef">
                    <path d="M1829 91l7 10h-14zM1829 241l7-10h-14zM1754 166l10-8v15zM1904 166l-10-8v15z" />
                    <path d="M1811 138h36l2 5 4 5h5v36l-5 2-4 4-2 5h-36l-2-5-4-4-5-2v-36l5-5 4-2z" />
                  </g>
                  <g fill="none" stroke="#e1e8ef" strokeWidth="5">
                    <path d="M1808 101.500q-18 6-28 18M1850 101.500q18 6 28 18" />
                  </g>
                  <path d="M1776 113v12h11zM1882 113v12h-11z" fill="#e1e8ef" />
                  <rect x="1807" y="144" width="44" height="44" rx="9" fill="#fff" />
                  <path d="M1798.500 137v60" stroke="#2b2bdc" strokeWidth="1.500" />
                  <path d="M1798 196.500h60" stroke="#dc2b2b" strokeWidth="1.500" />
                  <g fontFamily="Roboto, sans-serif" fontSize="14" textAnchor="middle">
                    <text x="1829" y="171" fill="#333">Front</text>
                    <text x="1798" y="133" fill="#2b2bdc">Z</text>
                    <text x="1867" y="202" fill="#dc2b2b">X</text>
                  </g>
                </ViewCube>
                <ViewMenu aria-label="View options"><Icon name="viewCube" /><Caret /></ViewMenu>
                <SideTabs>
                  {['material', 'cubeTable', 'cubeBraces', 'variableTable'].map((n) => (
                    <SideTab key={n} aria-label={n}><Icon name={n} /></SideTab>
                  ))}
                </SideTabs>
                <MeasureTools>
                  <HeaderIcon aria-label="Measure"><Icon name="measure" size={16} /></HeaderIcon>
                  <HeaderIcon aria-label="Mass properties"><Icon name="scale" size={15} /></HeaderIcon>
                </MeasureTools>
              </Canvas>
            </Workspace>
            <TabBar>
              <AddTab aria-label="Add tab">
                <svg width="16" height="16" viewBox="0 0 16 16" stroke="#555" strokeWidth="3" aria-hidden="true"><path d="M8 1v14M1 8h14" /></svg>
              </AddTab>
              {TABS.map((t) => (
                <Tab key={t.label} $active={t.active}>
                  {t.linked && (
                    <svg width="17" height="14" viewBox="0 0 17 14" aria-hidden="true">
                      <circle cx="7.500" cy="7" r="6.500" fill="#6f9cd0" />
                      <ellipse cx="7.500" cy="7" rx="2" ry="3" fill="#e8e8e8" />
                      <path d="M7.500 0.500v2M7.500 11.500v2" stroke="#e8e8e8" />
                    </svg>
                  )}
                  <Icon name={t.icon || 'studio'} size={18} />
                  {t.label}
                </Tab>
              ))}
            </TabBar>
          </Main>
        </Body>
      </Page>
    </>
  );
}
